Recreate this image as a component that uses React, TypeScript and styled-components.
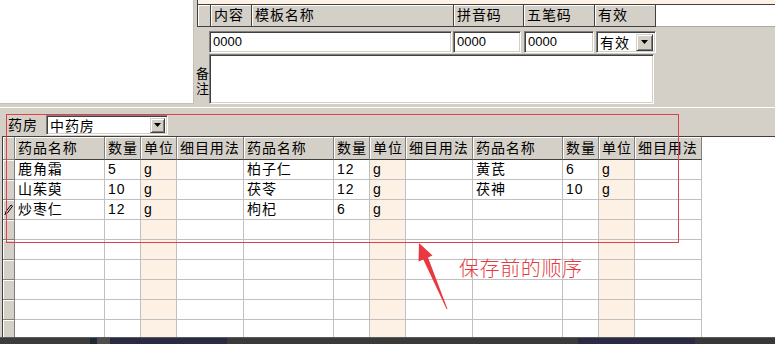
import styled, { createGlobalStyle } from "styled-components";

const FACE = `"Liberation Sans", "Noto Sans CJK SC", sans-serif`;

const GlobalStyle = createGlobalStyle`
  html, body {
    margin: 0;
    padding: 0;
    background: #d4d0c8;
  }
  body {
    font-family: ${FACE};
    font-size: 14px;
    color: #000;
  }
`;

type Drug = { name: string; qty: string; unit: string };

const columns = [
  { label: "药品名称", w: 90 },
  { label: "数量", w: 36 },
  { label: "单位", w: 36 },
  { label: "细目用法", w: 67 },
];

const prescription: (Drug | null)[][] = [
  [
    { name: "鹿角霜", qty: "5", unit: "g" },
    { name: "柏子仁", qty: "12", unit: "g" },
    { name: "黄芪", qty: "6", unit: "g" },
  ],
  [
    { name: "山茱萸", qty: "10", unit: "g" },
    { name: "茯苓", qty: "12", unit: "g" },
    { name: "茯神", qty: "10", unit: "g" },
  ],
  [
    { name: "炒枣仁", qty: "12", unit: "g" },
    { name: "枸杞", qty: "6", unit: "g" },
    null,
  ],
];

const EMPTY_ROWS = 6;

const strip = [
  { w: 90, tone: "#3c3c3c" },
  { w: 7, tone: "#1e2838" },
  { w: 13, tone: "#4e4e4e" },
  { w: 117, tone: "#2a2a44" },
  { w: 351, tone: "#3a3a3a" },
  { w: 117, tone: "#2a2a44" },
  { w: 80, tone: "#383838" },
];

const Screen = styled.div`
  position: relative;
  width: 775px;
  height: 344px;
  overflow: hidden;
  display: flex;
  flex-direction: column;
  background: #d4d0c8;
  font-family: ${FACE};
`;

const TopSection = styled.div`
  display: flex;
  height: 104px;
  flex-shrink: 0;
`;

const BlankPane = styled.div`
  width: 194px;
  box-sizing: border-box;
  background: #fff;
  border-right: 1px solid #c4c1b9;
  border-bottom: 1px solid #c4c1b9;
`;

const TemplatePane = styled.div`
  flex: 1;
  display: flex;
  flex-direction: column;
`;

const PrevRow = styled.div`
  height: 5px;
  box-sizing: border-box;
  margin-left: 3px;
  background: #fdf2e6;
  border-left: 1px solid #404040;
  border-bottom: 1px solid #404040;
`;

const HeaderRow = styled.div`
  display: flex;
  height: 22px;
  margin-left: 3px;
  border-left: 1px solid #404040;
`;

const HeadCell = styled.div<{ $w: number }>`
  flex: 0 0 ${(p) => p.$w}px;
  box-sizing: border-box;
  padding-left: 3px;
  background: #d4d0c8;
  border-right: 1px solid #404040;
  border-bottom: 1px solid #404040;
  box-shadow: inset 1px 1px 0 #fff;
  font-size: 14px;
  line-height: 21px;
  letter-spacing: 0.9px;
  white-space: nowrap;
  overflow: hidden;
`;

const HeaderFiller = styled.div`
  flex: 1;
  background: #fff;
  border-bottom: 1px solid #a8a8a8;
`;

const FormRow = styled.div`
  display: flex;
  align-items: flex-end;
  height: 26px;
  padding-left: 15px;
`;

const Sunken = styled.div<{ $w: number; $lead?: number }>`
  width: ${(p) => p.$w}px;
  margin-left: ${(p) => p.$lead ?? 0}px;
  box-sizing: border-box;
  background: #fff;
  border-style: solid;
  border-width: 1px;
  border-color: #808080 #fff #fff #808080;
  box-shadow: inset 1px 1px 0 #404040, inset -1px -1px 0 #d4d0c8;
`;

const Field = styled(Sunken)`
  height: 22px;
  padding-left: 3px;
  font-size: 13px;
  line-height: 19px;
`;

const Combo = styled(Sunken)<{ $h: number }>`
  height: ${(p) => p.$h}px;
  display: flex;
  align-items: center;
  padding: 0 2px 0 3px;
  font-size: 14px;
  letter-spacing: 0.9px;
  white-space: nowrap;
`;

const DropButton = styled.span<{ $size: number }>`
  margin-left: auto;
  width: ${(p) => p.$size}px;
  height: ${(p) => p.$size}px;
  box-sizing: border-box;
  display: flex;
  align-items: center;
  justify-content: center;
  background: #d4d0c8;
  border: 1px solid;
  border-color: #d4d0c8 #404040 #404040 #d4d0c8;
  box-shadow: inset 1px 1px 0 #fff, inset -1px -1px 0 #808080;
`;

const NoteRow = styled.div`
  display: flex;
  height: 51px;
  box-sizing: border-box;
  padding: 1px 0 0 2px;
`;

const NoteLabel = styled.div`
  width: 13px;
  display: flex;
  flex-direction: column;
  justify-content: center;
  align-items: center;
  font-size: 13px;
  line-height: 15px;
  padding-top: 3px;
  box-sizing: border-box;
`;

const NoteBox = styled(Sunken)`
  height: 50px;
`;

const PharmacyBar = styled.div`
  display: flex;
  align-items: flex-start;
  flex-shrink: 0;
  height: 29px;
  box-sizing: border-box;
  margin-top: 3px;
  padding: 7px 0 0 8px;
  border-top: 1px solid #fff;
`;

const BarLabel = styled.span`
  width: 38px;
  font-size: 14px;
  line-height: 20px;
  letter-spacing: 0.9px;
`;

const Grid = styled.div`
  flex: 1;
  min-height: 0;
  overflow: hidden;
  margin-left: 2px;
  background: #fff;
  border-top: 1px solid #404040;
  border-left: 1px solid #404040;
`;

const GridHead = styled.div`
  display: flex;
  height: 23px;
`;

const GridHeadCell = styled(HeadCell)`
  border-right-color: #808080;
  line-height: 22px;
`;

const GridRow = styled.div`
  display: flex;
  height: 20px;
`;

const Indicator = styled.div`
  flex: 0 0 12px;
  box-sizing: border-box;
  display: flex;
  align-items: center;
  justify-content: center;
  background: #d4d0c8;
  border-right: 1px solid #808080;
  border-bottom: 1px solid #808080;
  box-shadow: inset 1px 1px 0 #fff;
`;

const GridCell = styled.div<{ $w: number; $tint?: boolean }>`
  flex: 0 0 ${(p) => p.$w}px;
  box-sizing: border-box;
  padding-left: 3px;
  background: ${(p) => (p.$tint ? "#fdf1e6" : "#fff")};
  border-right: 1px solid #c0c0c0;
  border-bottom: 1px solid #c0c0c0;
  font-size: 14px;
  line-height: 19px;
  letter-spacing: 0.9px;
  white-space: nowrap;
  overflow: hidden;
`;

const TaskStrip = styled.div`
  display: flex;
  height: 7px;
  flex-shrink: 0;
`;

const StripPiece = styled.div<{ $w: number; $tone: string }>`
  flex: 0 0 ${(p) => p.$w}px;
  background: ${(p) => p.$tone};
  border-top: 1px solid #5a5a5a;
  box-sizing: border-box;
`;

const Highlight = styled.div`
  position: absolute;
  left: 6px;
  top: 114px;
  width: 673px;
  height: 129px;
  box-sizing: border-box;
  border: 1px solid #e0404c;
  pointer-events: none;
`;

const ArrowLayer = styled.svg`
  position: absolute;
  left: 0;
  top: 0;
  pointer-events: none;
`;

const Annotation = styled.div`
  position: absolute;
  left: 459px;
  top: 256px;
  color: #e53a40;
  font-family: "Noto Sans CJK SC", sans-serif;
  font-weight: 300;
  font-size: 20px;
  line-height: 24px;
  letter-spacing: 0.6px;
  white-space: nowrap;
`;

const Caret = () => (
  <svg width="7" height="4" viewBox="0 0 7 4">
    <polygon points="0,0 7,0 3.5,4" fill="#000" />
  </svg>
);

const Pencil = () => (
  <svg width="9" height="11" viewBox="0 0 9 11">
    <path d="M1.5 10 L2 7.5 L7 1 L8.5 2.2 L3.5 8.8 Z" fill="none" stroke="#000" strokeWidth="1" />
    <path d="M0.5 10.5 L2 9.5" stroke="#000" strokeWidth="1" />
  </svg>
);

const DrugCells = ({ drug }: { drug: Drug | null }) => (
  <>
    <GridCell $w={columns[0].w}>{drug?.name}</GridCell>
    <GridCell $w={columns[1].w}>{drug?.qty}</GridCell>
    <GridCell $w={columns[2].w} $tint>
      {drug?.unit}
    </GridCell>
    <GridCell $w={columns[3].w} />
  </>
);

export default function App() {
  const rows: (Drug | null)[][] = [
    ...prescription,
    ...Array.from({ length: EMPTY_ROWS }, () => [null, null, null]),
  ];

  return (
    <>
      <GlobalStyle />
      <Screen>
        <TopSection>
          <BlankPane />
          <TemplatePane>
            <PrevRow />
            <HeaderRow>
              <HeadCell $w={13} />
              <HeadCell $w={41}>内容</HeadCell>
              <HeadCell $w={202}>模板名称</HeadCell>
              <HeadCell $w={70}>拼音码</HeadCell>
              <HeadCell $w={71}>五笔码</HeadCell>
              <HeadCell $w={61}>有效</HeadCell>
              <HeaderFiller />
            </HeaderRow>
            <FormRow>
              <Field $w={243}>0000</Field>
              <Field $w={68} $lead={1}>
                0000
              </Field>
              <Field $w={70} $lead={3}>
                0000
              </Field>
              <Combo $w={60} $lead={2} $h={22}>
                有效
                <DropButton $size={17}>
                  <Caret />
                </DropButton>
              </Combo>
            </FormRow>
            <NoteRow>
              <NoteLabel>
                {"备注".split("").map((ch) => (
                  <span key={ch}>{ch}</span>
                ))}
              </NoteLabel>
              <NoteBox $w={445} />
            </NoteRow>
          </TemplatePane>
        </TopSection>

        <PharmacyBar>
          <BarLabel>药房</BarLabel>
          <Combo $w={122} $h={20}>
            中药房
            <DropButton $size={15}>
              <Caret />
            </DropButton>
          </Combo>
        </PharmacyBar>

        <Grid>
          <GridHead>
            <Indicator />
            {[0, 1, 2].map((g) =>
              columns.map((c) => (
                <GridHeadCell key={`${g}-${c.label}`} $w={c.w}>
                  {c.label}
                </GridHeadCell>
              ))
            )}
          </GridHead>
          {rows.map((row, i) => (
            <GridRow key={i}>
              <Indicator>{i === 2 && <Pencil />}</Indicator>
              {row.map((drug, g) => (
                <DrugCells key={g} drug={drug} />
              ))}
            </GridRow>
          ))}
        </Grid>

        <TaskStrip>
          {strip.map((s, i) => (
            <StripPiece key={i} $w={s.w} $tone={s.tone} />
          ))}
        </TaskStrip>

        <Highlight />
        <ArrowLayer width="775" height="344" viewBox="0 0 775 344">
          <polygon
            points="419,243 432.5,255.5 428,257.5 447.5,309 446.5,309 423.3,259.6 418.5,261.5"
            fill="#e8393f"
          />
        </ArrowLayer>
        <Annotation>保存前的顺序</Annotation>
      </Screen>
    </>
  );
}
